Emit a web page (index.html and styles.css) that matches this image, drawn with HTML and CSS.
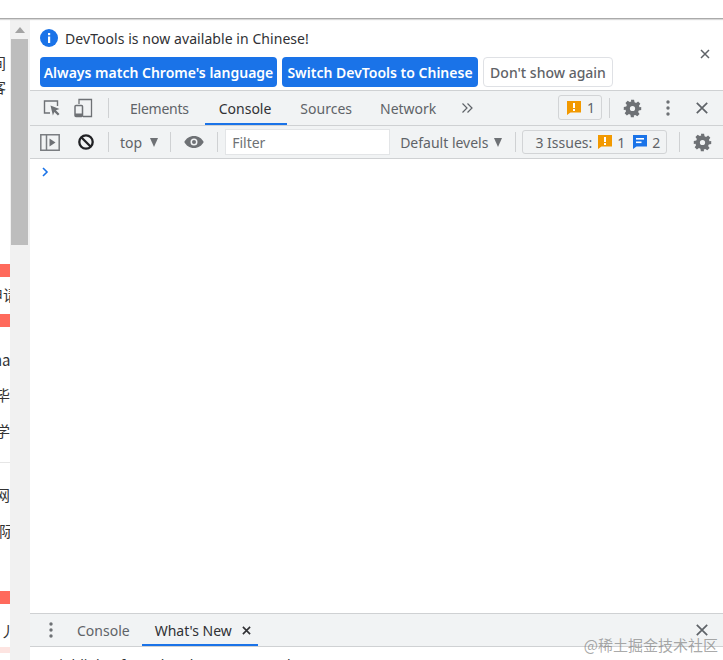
FILE: index.html
```html
<!DOCTYPE html>
<html lang="en">
<head>
<meta charset="utf-8">
<title>DevTools</title>
<link rel="stylesheet" href="styles.css">
</head>
<body>
<div class="window">
  <div class="topbar"></div>
  <div class="main">
    <div class="page">
      <div class="frag f1">间</div>
      <div class="frag f2">客</div>
      <div class="red r1"></div>
      <div class="frag f3">申请</div>
      <div class="red r2"></div>
      <div class="frag f4">ha</div>
      <div class="frag f5">毕</div>
      <div class="frag f6">学</div>
      <div class="rule"></div>
      <div class="frag f7">网</div>
      <div class="frag f8">际</div>
      <div class="red r3"></div>
      <div class="frag f9">丿</div>
      <div class="pink"></div>
    </div>
    <div class="scrollbar">
      <div class="arrow"></div>
      <div class="thumb"></div>
    </div>
    <div class="devtools">
      <div class="infobar">
        <div class="info-main">
          <div class="info-line">
            <svg class="info-icon" viewBox="0 0 18 18"><circle cx="9" cy="9" r="9" fill="#1a73e8"/><rect x="8" y="4" width="2.2" height="2.2" fill="#fff"/><rect x="8" y="7.5" width="2.2" height="6.5" fill="#fff"/></svg>
            <span>DevTools is now available in Chinese!</span>
          </div>
          <div class="info-actions">
            <button class="btn primary wide">Always match Chrome's language</button>
            <button class="btn primary mid">Switch DevTools to Chinese</button>
            <button class="btn plain">Don't show again</button>
          </div>
        </div>
        <svg class="info-close" viewBox="0 0 10 10"><path d="M1 1l8 8M9 1l-8 8" stroke="#5f6368" stroke-width="1.5" fill="none"/></svg>
      </div>

      <div class="tabbar">
        <svg class="ico inspect" viewBox="0 0 20 20"><path d="M8 15H2.500V3h13v5" fill="none" stroke="#6e7175" stroke-width="1.400"/><path d="M8.500 7.500l9 3.400-3.600 1.400 3.600 3.600-1.600 1.600-3.600-3.600-1.400 3.600z" fill="#6e7175"/></svg>
        <svg class="ico device" viewBox="0 0 20 20"><path d="M5 6V1.500h12.500v17H9" fill="none" stroke="#6e7175" stroke-width="1.300"/><rect x="1" y="7.500" width="7.500" height="11" rx="1" fill="none" stroke="#6e7175" stroke-width="1.500"/><rect x="1" y="15.500" width="7.500" height="3" fill="#6e7175"/></svg>
        <span class="sep sep-a"></span>
        <span class="tab t-elements">Elements</span>
        <span class="tab active t-console">Console</span>
        <span class="tab t-sources">Sources</span>
        <span class="tab t-network">Network</span>
        <svg class="more" viewBox="0 0 12 12"><path d="M1.500 1.500L6 6l-4.500 4.500M6.500 1.500L11 6l-4.500 4.500" fill="none" stroke="#5f6368" stroke-width="1.200"/></svg>
        <span class="spacer"></span>
        <span class="badge">
          <svg class="msg" viewBox="0 0 14 14"><path d="M0 0h14v11.500H3.500L0 14z" fill="#f29900"/><rect x="6" y="2" width="2" height="5" fill="#fff"/><rect x="6" y="8" width="2" height="2" fill="#fff"/></svg>
          <span>1</span>
        </span>
        <span class="sep sep-b"></span>
        <svg class="gear g-top" viewBox="0 0 24 24"><path fill="#6e7175" fill-rule="evenodd" d="M10 1h4l.6 3.100 1.900.8 2.600-1.800 2.800 2.800-1.800 2.600.8 1.900L23 10v4l-3.100.6-.8 1.900 1.800 2.600-2.800 2.800-2.600-1.800-1.900.8L13.900 23h-4l-.5-3.100-1.900-.8-2.600 1.800-2.800-2.800 1.800-2.600-.8-1.900L1 14v-4l3.100-.5.8-1.900-1.800-2.700 2.800-2.800 2.600 1.800 1.900-.8zM12 8.700a3.300 3.300 0 1 0 0 6.600 3.300 3.300 0 0 0 0-6.600z"/></svg>
        <svg class="dots d-top" viewBox="0 0 4 16"><circle cx="2" cy="2" r="1.700" fill="#6e7175"/><circle cx="2" cy="8" r="1.700" fill="#6e7175"/><circle cx="2" cy="14" r="1.700" fill="#6e7175"/></svg>
        <svg class="close-x" viewBox="0 0 12 12"><path d="M.8.800l10.400 10.400M11.200.800L.8 11.200" stroke="#5f6368" stroke-width="1.700" fill="none"/></svg>
      </div>

      <div class="toolbar">
        <svg class="ico sidebar" viewBox="0 0 20 17"><path d="M.8.800h18.400v15.400H.8zM6.500.800v15.400" fill="none" stroke="#7a7d81" stroke-width="1.500"/><path d="M9.500 4.500l6 4-6 4z" fill="#6e7175"/></svg>
        <svg class="ico block" viewBox="0 0 16 16"><circle cx="8" cy="8" r="6.700" fill="none" stroke="#202124" stroke-width="2.300"/><path d="M3.500 3.500l9 9" stroke="#202124" stroke-width="2.300"/></svg>
        <span class="sep sep-c"></span>
        <span class="ctx">top</span>
        <span class="tri tri-top"></span>
        <span class="sep sep-d"></span>
        <svg class="eye" viewBox="0 0 20 14"><path fill="#6e7175" fill-rule="evenodd" d="M10 1C5.500 1 2 3.600.3 7 2 10.400 5.500 13 10 13s8-2.600 9.700-6C18 3.600 14.500 1 10 1zm0 2.500a3.500 3.500 0 1 1 0 7 3.500 3.500 0 0 1 0-7z"/><circle cx="10" cy="7" r="2" fill="#6e7175"/></svg>
        <span class="sep sep-e"></span>
        <span class="filter">Filter</span>
        <span class="levels">Default levels</span>
        <span class="tri tri-levels"></span>
        <span class="sep sep-f"></span>
        <span class="issues">
          <span class="issues-label">3 Issues:</span>
          <svg class="msg" viewBox="0 0 14 14"><path d="M0 0h14v11.500H3.500L0 14z" fill="#f29900"/><rect x="6" y="2" width="2" height="5" fill="#fff"/><rect x="6" y="8" width="2" height="2" fill="#fff"/></svg>
          <span class="count">1</span>
          <svg class="msg msg-blue" viewBox="0 0 14 14"><path d="M0 0h14v11.500H3.500L0 14z" fill="#1a73e8"/><rect x="3" y="3" width="8" height="1.600" fill="#fff"/><rect x="3" y="6.500" width="5.500" height="1.600" fill="#fff"/></svg>
          <span class="count">2</span>
        </span>
        <span class="sep sep-g"></span>
        <svg class="gear g-bottom" viewBox="0 0 24 24"><path fill="#6e7175" fill-rule="evenodd" d="M10 1h4l.6 3.100 1.900.8 2.600-1.800 2.800 2.800-1.800 2.600.8 1.900L23 10v4l-3.100.6-.8 1.900 1.800 2.600-2.800 2.800-2.600-1.800-1.900.8L13.900 23h-4l-.5-3.100-1.900-.8-2.600 1.800-2.800-2.800 1.800-2.600-.8-1.900L1 14v-4l3.100-.5.8-1.900-1.800-2.700 2.800-2.800 2.600 1.800 1.900-.8zM12 8.700a3.300 3.300 0 1 0 0 6.600 3.300 3.300 0 0 0 0-6.600z"/></svg>
      </div>

      <div class="console">
        <svg class="prompt" viewBox="0 0 7 10"><path d="M1 1l4 4-4 4" fill="none" stroke="#1a73e8" stroke-width="1.600"/></svg>
      </div>

      <div class="drawer">
        <svg class="dots d-drawer" viewBox="0 0 4 16"><circle cx="2" cy="2" r="1.700" fill="#6e7175"/><circle cx="2" cy="8" r="1.700" fill="#6e7175"/><circle cx="2" cy="14" r="1.700" fill="#6e7175"/></svg>
        <span class="tab d-console">Console</span>
        <span class="tab active d-new">What's New
          <svg class="tab-x" viewBox="0 0 10 10"><path d="M1 1l8 8M9 1l-8 8" stroke="#303134" stroke-width="1.800" fill="none"/></svg>
        </span>
        <span class="spacer"></span>
        <svg class="close-x d-close" viewBox="0 0 12 12"><path d="M.8.800l10.400 10.400M11.200.800L.8 11.200" stroke="#5f6368" stroke-width="1.700" fill="none"/></svg>
      </div>
      <div class="drawer-body">Highlights from the Chrome 100 update</div>
    </div>
  </div>
  <div class="watermark">@稀土掘金技术社区</div>
</div>
</body>
</html>
```

FILE: styles.css
```css
* { box-sizing: border-box; }
html, body { margin: 0; padding: 0; background: #fff; }
body { font-family: "Noto Sans", "Open Sans", sans-serif; color: #5f6368; }
.window { position: relative; width: 723px; height: 660px; overflow: hidden; display: flex; flex-direction: column; }
.topbar { position: relative; z-index: 1; height: 19px; flex: none; background: #fff; border-bottom: 1px solid #aaa; box-shadow: 0 1px 1px #d8d8d8; }
.main { flex: 1; display: flex; min-height: 0; }

/* clipped page behind devtools */
.page { width: 10px; flex: none; overflow: hidden; display: flex; flex-direction: column; background: #fff; }
.frag { width: 40px; height: 18px; margin-left: -9px; font: 15px/18px "Noto Sans CJK SC", sans-serif; color: #333; white-space: nowrap; flex: none; }
.f1 { margin-top: 35px; }
.f2 { margin-top: 6px; }
.red { height: 13px; flex: none; background: #ff6a5c; }
.r1 { margin-top: 168px; }
.f3 { margin-top: 9px; margin-left: -12px; }
.r2 { margin-top: 10px; }
.f4 { margin-top: 24px; margin-left: -7px; }
.f5 { margin-top: 17px; margin-left: -5px; }
.f6 { margin-top: 18px; margin-left: -5px; }
.rule { height: 1px; flex: none; margin-top: 22px; background: #e6e6e6; }
.f7 { margin-top: 23px; margin-left: -5px; }
.f8 { margin-top: 18px; margin-left: -1px; }
.r3 { margin-top: 51px; }
.f9 { margin-top: 18px; margin-left: 0; }
.pink { height: 6px; flex: none; margin-top: 7px; background: #fde4e1; }

.scrollbar { width: 20px; flex: none; background: #f1f1f1; padding: 0 2px 0 1px; }
.arrow { width: 0; height: 0; margin: 8px auto 6px; border-left: 5px solid transparent; border-right: 5px solid transparent; border-bottom: 6px solid #a3a3a3; }
.thumb { height: 206px; margin-top: 0; background: #bdbdbd; }

/* devtools */
.devtools { flex: 1; min-width: 0; display: flex; flex-direction: column; background: #fff; }
.infobar { height: 72px; flex: none; display: flex; padding: 9px 0 0 10px; border-bottom: 1px solid #cfd1d3; }
.info-main { flex: 1; }
.info-line { display: flex; align-items: center; gap: 7px; height: 20px; font-size: 14px; letter-spacing: .06px; color: #303134; }
.info-icon { width: 18px; height: 18px; flex: none; }
.info-actions { display: flex; gap: 5px; margin-top: 9px; }
.btn { height: 30px; padding: 1px 0 0; border-radius: 4px; font: 600 14px/28px "Noto Sans", sans-serif; text-align: center; white-space: nowrap; }
.primary { border: 0; background: #1a73e8; color: #fff; }
.wide { width: 237px; }
.mid { width: 196px; }
.plain { width: 130px; border: 1px solid #dfe1e5; background: #fff; color: #5f6368; font-weight: 500; }
.info-close { width: 10px; height: 10px; margin: 21px 13px 0 0; flex: none; }

.tabbar, .toolbar, .drawer { display: flex; align-items: center; background: #f1f3f4; flex: none; }
.tabbar { height: 35px; border-bottom: 1px solid #cfd1d3; font-size: 14px; }
.toolbar { height: 33px; border-bottom: 1px solid #cfd1d3; font-size: 14px; }
.spacer { flex: 1; }
.sep { width: 1px; height: 20px; background: #cfd1d3; flex: none; }
.ico, .gear, .dots, .close-x, .more, .eye { flex: none; }
.inspect { width: 20px; height: 20px; margin-left: 12px; }
.device { width: 20px; height: 20px; margin-left: 12px; }
.sep-a { margin-left: 14px; }
.tab { position: relative; display: flex; align-items: center; height: 100%; flex: none; color: #5f6368; font-size: 14px; white-space: nowrap; }
.tab.active { color: #303134; }
.tab.active::after { content: ""; position: absolute; left: 0; right: 0; bottom: 0; height: 2px; background: #1a73e8; }
.t-elements { margin-left: 21px; letter-spacing: -.25px; }
.t-console { margin-left: 16px; padding: 0 16px 0 14px; }
.t-sources { margin-left: 13px; }
.t-network { margin-left: 28px; }
.more { width: 12px; height: 12px; margin-left: 25px; }
.badge { display: flex; align-items: center; gap: 6px; height: 25px; padding: 0 8px; width: 44px; margin-top: -1px; border: 1px solid #d2d4d6; border-radius: 3px; flex: none; }
.msg { width: 14px; height: 14px; flex: none; }
.sep-b { margin-left: 7px; }
.g-top { width: 19px; height: 19px; margin-left: 13px; }
.d-top { width: 4px; height: 16px; margin-left: 24px; }
.close-x { width: 12px; height: 12px; }
.tabbar .close-x { margin: 0 15px 0 26px; }

.sidebar { width: 20px; height: 17px; margin-left: 10px; }
.block { width: 16px; height: 16px; margin-left: 18px; }
.sep-c { margin-left: 14px; }
.ctx { margin-left: 11px; }
.tri { width: 0; height: 0; flex: none; border-left: 4.500px solid transparent; border-right: 4.500px solid transparent; border-top: 9px solid #6e7175; }
.tri-top { margin-left: 8px; }
.sep-d { margin-left: 12px; }
.eye { width: 20px; height: 14px; margin-left: 13px; }
.sep-e { margin-left: 13px; }
.filter { width: 165px; height: 26px; margin-left: 7px; padding-left: 6px; background: #fff; border: 1px solid #e3e5e7; font-size: 14px; line-height: 26px; color: #6e7175; flex: none; }
.levels { margin-left: 10px; white-space: nowrap; }
.tri-levels { margin-left: 6px; }
.sep-f { margin-left: 13px; }
.issues { display: flex; align-items: center; height: 24px; width: 145px; margin-left: 6px; padding-left: 12px; border: 1px solid #d2d4d6; border-radius: 3px; flex: none; }
.issues-label { margin-right: 6px; white-space: nowrap; }
.count { margin-left: 5px; }
.msg-blue { margin-left: 8px; }
.sep-g { margin-left: 12px; }
.g-bottom { width: 19px; height: 19px; margin-left: 13px; }

.console { flex: 1; min-height: 0; padding: 8px 0 0 12px; background: #fff; }
.prompt { display: block; width: 7px; height: 10px; }

.drawer { height: 34px; border-top: 1px solid #cfd1d3; border-bottom: 1px solid #cfd1d3; }
.d-drawer { width: 4px; height: 16px; margin-left: 19px; }
.d-console { margin-left: 24px; }
.d-new { margin-left: 12px; padding: 0 5px 0 13px; gap: 10px; width: 116px; }
.tab-x { width: 9px; height: 9px; flex: none; }
.drawer .d-close { margin-right: 15px; }
.drawer-body { height: 13px; flex: none; padding: 9px 0 0 19px; overflow: hidden; font-size: 14px; line-height: 18px; color: #303134; white-space: nowrap; }

.watermark { position: absolute; right: 5px; bottom: 6px; font: 15px/18px "Noto Sans CJK SC", sans-serif; color: rgba(120,120,120,.65); white-space: nowrap; }
```
